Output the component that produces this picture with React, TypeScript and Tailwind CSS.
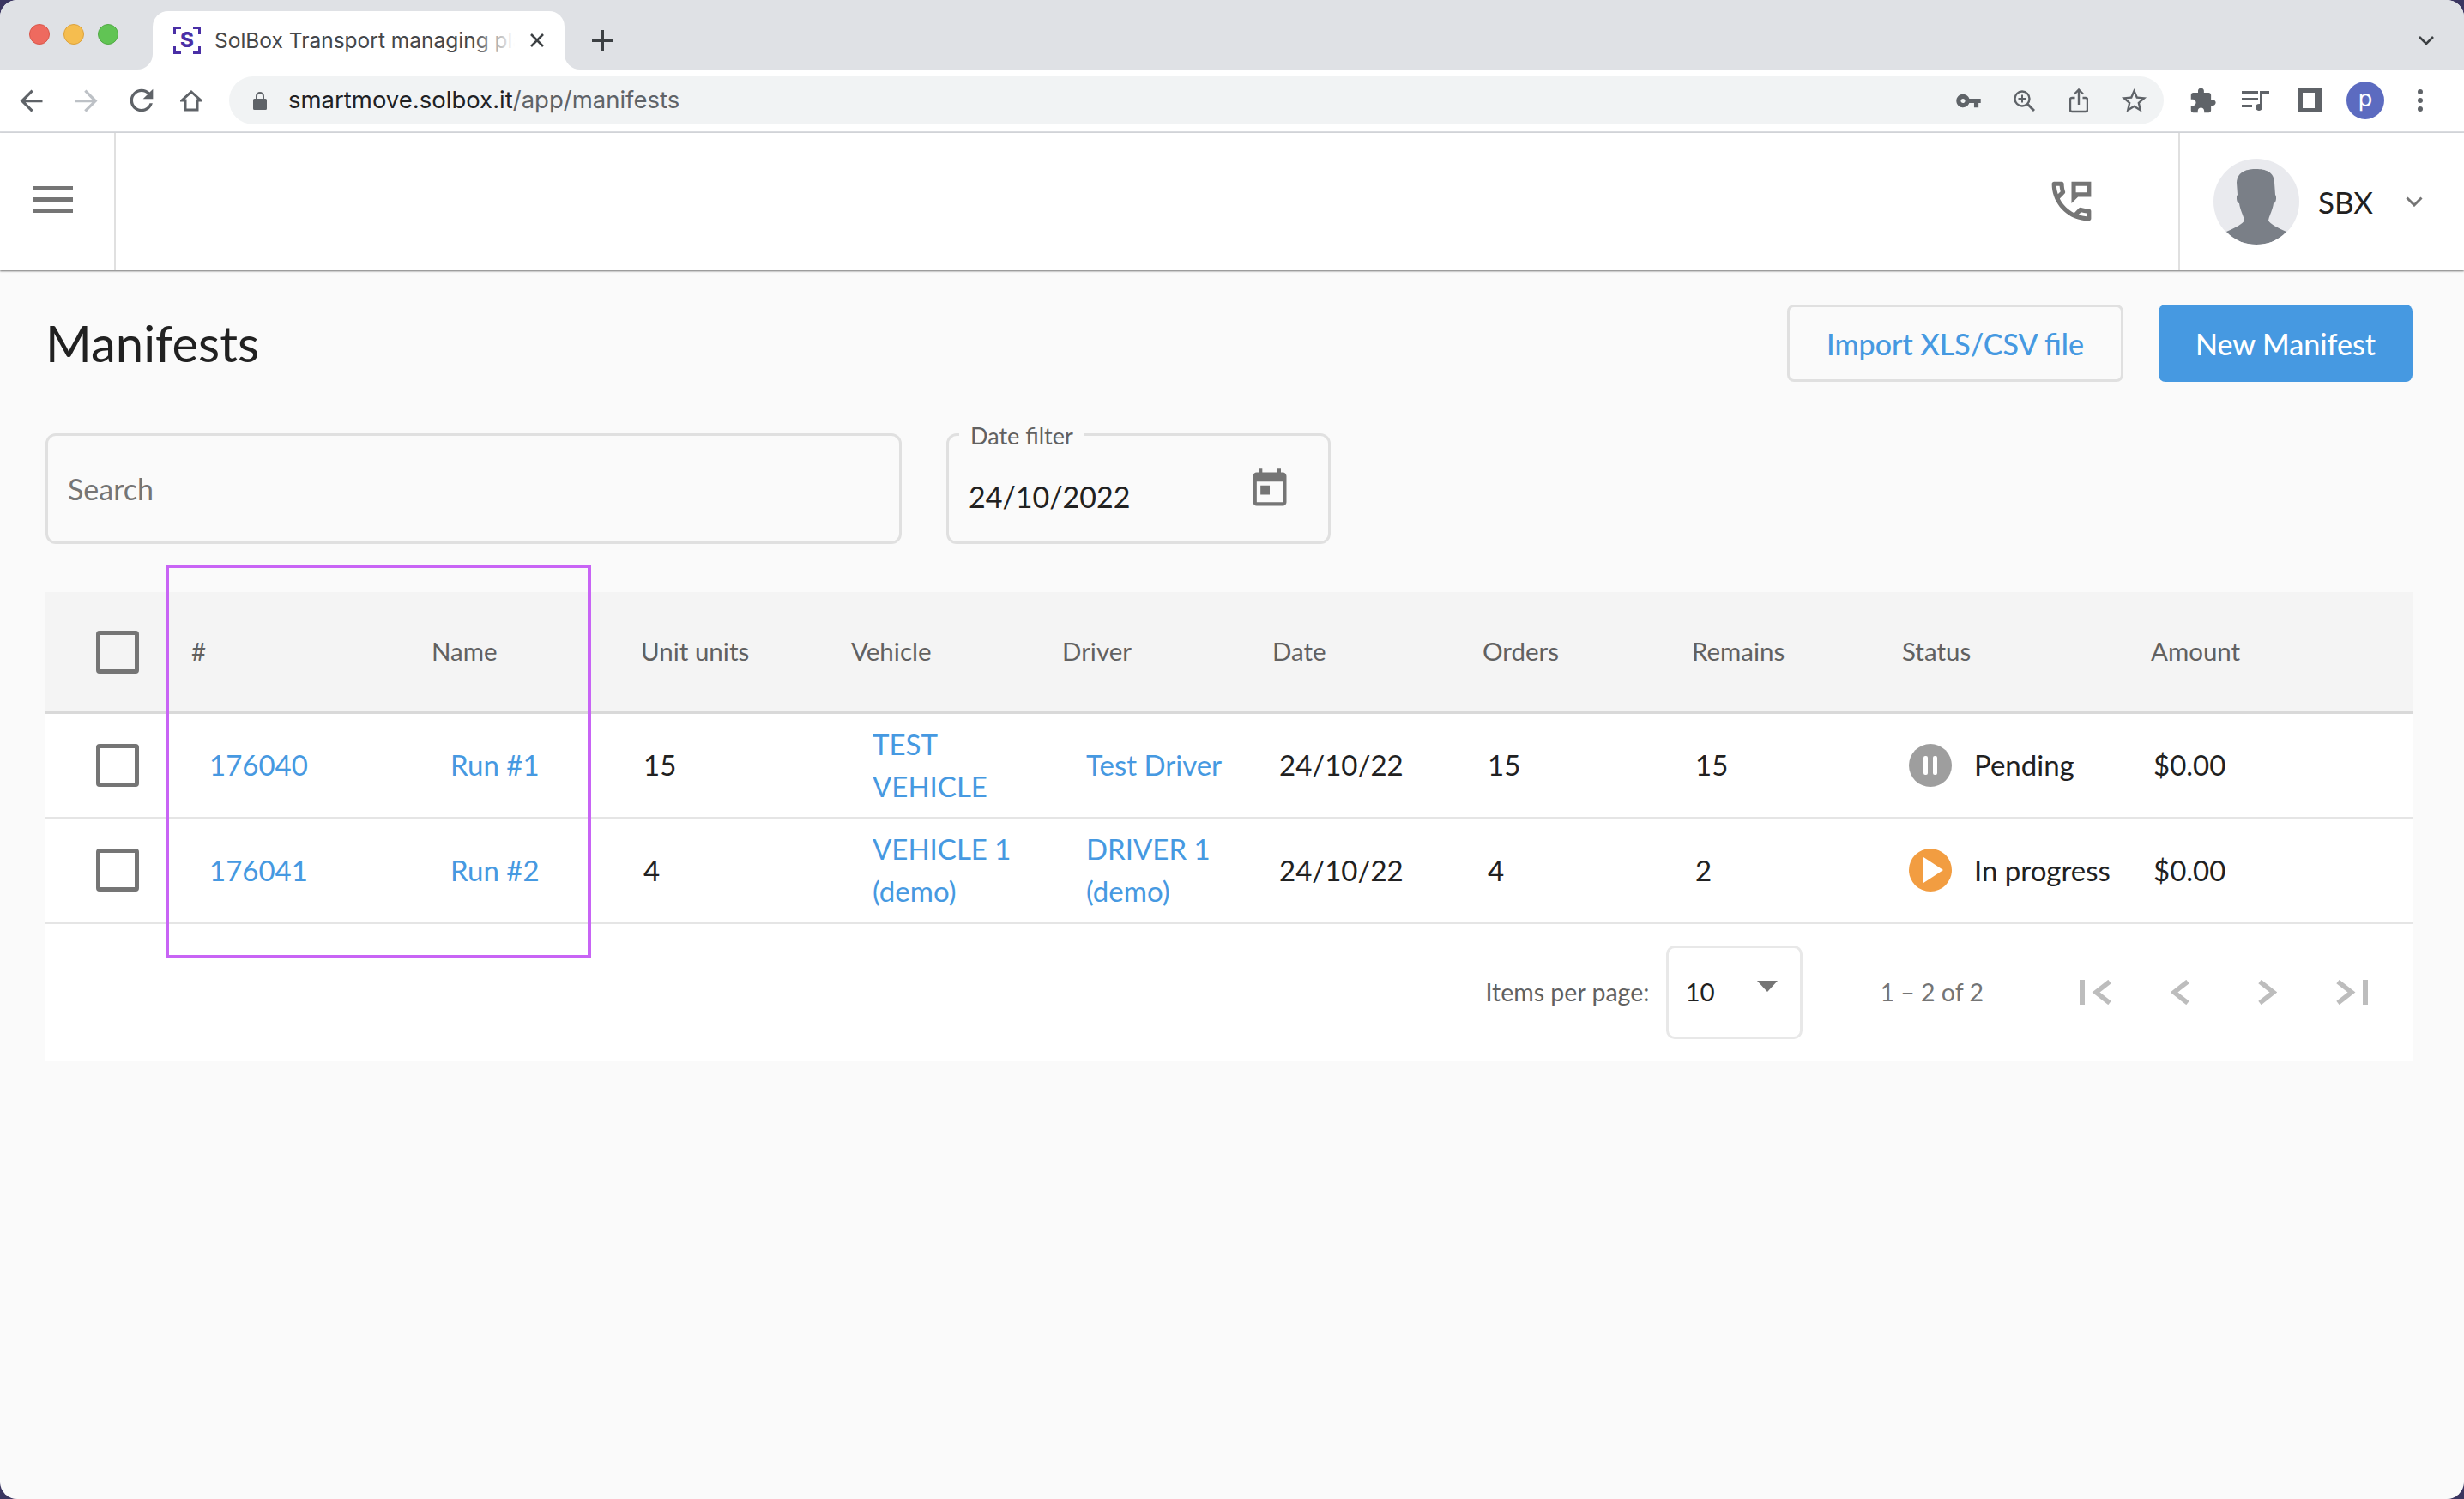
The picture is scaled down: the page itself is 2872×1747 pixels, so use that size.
import { Fragment } from "react";

const GRID = "grid grid-cols-[170px_280px_244px_245px_246px_245px_245px_244px_245px_290px_1fr]";

function Checkbox() {
  return <div className="ml-[59px] h-[50px] w-[50px] rounded-[4px] border-[5px] border-[#757575]" />;
}

function Favicon() {
  return (
    <svg viewBox="0 0 32 32" className="h-[32px] w-[32px]">
      <path
        d="M0 9V0h9v3H3v6zM23 0h9v9h-3V3h-6zM32 23v9h-9v-3h6v-6zM9 32H0v-9h3v6h6z"
        fill="#4a2fa6"
      />
      <text x="16" y="24" textAnchor="middle" fontSize="24" fontWeight="800" fill="#4a2fa6" fontFamily="Inter, sans-serif">
        S
      </text>
    </svg>
  );
}

function Tab() {
  return (
    <div className="relative ml-[40px] mt-[13px] flex h-[68px] w-[480px] items-center rounded-t-[18px] bg-white pl-[24px]">
      <div className="absolute bottom-0 left-[-18px] h-[18px] w-[18px] bg-white">
        <div className="h-full w-full rounded-br-[18px] bg-[#dfe1e5]" />
      </div>
      <div className="absolute bottom-0 right-[-18px] h-[18px] w-[18px] bg-white">
        <div className="h-full w-full rounded-bl-[18px] bg-[#dfe1e5]" />
      </div>
      <Favicon />
      <div className="relative ml-[16px] w-[350px] overflow-hidden whitespace-nowrap text-[24.5px] text-[#45474a]">
        SolBox Transport managing platform
        <div className="absolute inset-y-0 right-0 w-[50px] bg-gradient-to-r from-transparent to-white" />
      </div>
      <svg viewBox="0 0 16 16" className="ml-[18px] h-[16px] w-[16px]" stroke="#3c4043" strokeWidth="2.6">
        <path d="M1 1l14 14M15 1L1 15" />
      </svg>
    </div>
  );
}

function ChromeIcon({ d, className, fill = "#5f6368" }: { d: string; className: string; fill?: string }) {
  return (
    <svg viewBox="0 0 24 24" className={className} fill={fill}>
      <path d={d} />
    </svg>
  );
}

function BrowserChrome() {
  return (
    <div className="[font-family:Inter,sans-serif]">
      <div className="flex h-[81px] items-start bg-[#dfe1e5]">
        <div className="ml-[34px] mt-[28px] flex gap-[16px]">
          <div className="h-[24px] w-[24px] rounded-full border border-[#d9564a] bg-[#ee6a5f]" />
          <div className="h-[24px] w-[24px] rounded-full border border-[#dca23c] bg-[#f5bd4f]" />
          <div className="h-[24px] w-[24px] rounded-full border border-[#52aa45] bg-[#61c454]" />
        </div>
        <Tab />
        <svg viewBox="0 0 24 24" className="ml-[32px] mt-[35px] h-[24px] w-[24px]" stroke="#3c4043" strokeWidth="4">
          <path d="M12 0v24M0 12h24" />
        </svg>
        <svg viewBox="0 0 18 11" fill="none" className="ml-auto mr-[35px] mt-[42px] h-[11px] w-[18px]" stroke="#3c4043" strokeWidth="2.6">
          <path d="M1 1l8 8 8-8" />
        </svg>
      </div>
      <div className="flex h-[72px] items-center bg-white">
        <ChromeIcon
          className="ml-[17px] h-[39px] w-[39px]"
          d="M20 11H7.83l5.59-5.59L12 4l-8 8 8 8 1.41-1.41L7.83 13H20v-2z"
        />
        <ChromeIcon
          className="ml-[25px] h-[39px] w-[39px] rotate-180"
          fill="#bdc1c6"
          d="M20 11H7.83l5.59-5.59L12 4l-8 8 8 8 1.41-1.41L7.83 13H20v-2z"
        />
        <ChromeIcon
          className="ml-[25px] h-[40px] w-[40px]"
          d="M17.65 6.35C16.2 4.9 14.21 4 12 4c-4.42 0-7.99 3.58-7.99 8s3.57 8 7.99 8c3.73 0 6.84-2.55 7.73-6h-2.08c-.82 2.33-3.04 4-5.65 4-3.31 0-6-2.69-6-6s2.69-6 6-6c1.66 0 3.14.69 4.22 1.78L13 11h7V4l-2.35 2.35z"
        />
        <svg viewBox="0 0 26 25" fill="none" className="ml-[25px] h-[25px] w-[26px]" stroke="#5f6368" strokeWidth="3">
          <path d="M13 2l11 10h-4v11H6V12H2z" />
        </svg>
        <div className="ml-[31px] flex h-[56px] w-[2255px] items-center rounded-full bg-[#f1f3f4]">
          <svg viewBox="0 0 16 21" className="ml-[28px] h-[21px] w-[16px]" fill="#5f6368">
            <path d="M3 8V5a5 5 0 0 1 10 0v3h1.5A1.5 1.5 0 0 1 16 9.500V19.500A1.500 1.500 0 0 1 14.500 21H1.500A1.500 1.500 0 0 1 0 19.500V9.500A1.500 1.500 0 0 1 1.500 8zm2 0h6V5a3 3 0 0 0-6 0z" />
          </svg>
          <div className="ml-[25px] text-[27.5px] text-[#202124]">
            smartmove.solbox.it<span className="text-[#5f6368]">/app/manifests</span>
          </div>
          <ChromeIcon
            className="ml-auto h-[31px] w-[31px]"
            d="M12.65 10C11.83 7.67 9.61 6 7 6c-3.31 0-6 2.69-6 6s2.69 6 6 6c2.61 0 4.83-1.67 5.65-4H17v4h4v-4h2v-4H12.65zM7 14c-1.100 0-2-.9-2-2s.9-2 2-2 2 .9 2 2-.9 2-2 2z"
          />
          <svg viewBox="0 0 25 25" fill="none" className="ml-[37px] h-[25px] w-[25px]" stroke="#5f6368" strokeWidth="2.4">
            <circle cx="10" cy="10" r="8.500" />
            <path d="M16 16l8 8" strokeWidth="3" />
            <path d="M10 5.500v9M5.500 10h9" strokeWidth="2" />
          </svg>
          <svg viewBox="0 0 22 29" fill="none" className="ml-[40px] h-[29px] w-[22px]" stroke="#5f6368" strokeWidth="2.400">
            <path d="M6.500 11H3a2 2 0 0 0-2 2v12a2 2 0 0 0 2 2h16a2 2 0 0 0 2-2V13a2 2 0 0 0-2-2h-3.500M11 19V2M6 6.500L11 1.500l5 5" />
          </svg>
          <ChromeIcon
            className="ml-[36px] h-[35px] w-[35px]"
            d="M22 9.240l-7.190-.62L12 2 9.190 8.630 2 9.240l5.460 4.730L5.820 21 12 17.270 18.180 21l-1.630-7.030L22 9.240zM12 15.400l-3.760 2.270 1-4.280-3.320-2.880 4.380-.38L12 6.100l1.710 4.040 4.380.38-3.320 2.880 1 4.280L12 15.400z"
          />
          <div className="w-[17px]" />
        </div>
        <ChromeIcon
          className="ml-[29px] h-[33px] w-[33px]"
          d="M20.500 11H19V7c0-1.100-.9-2-2-2h-4V3.500C13 2.120 11.880 1 10.500 1S8 2.120 8 3.500V5H4c-1.100 0-1.990.9-1.990 2v3.800H3.500c1.490 0 2.700 1.210 2.700 2.700s-1.210 2.700-2.700 2.700H2V20c0 1.100.9 2 2 2h3.800v-1.500c0-1.490 1.210-2.700 2.700-2.700 1.490 0 2.700 1.210 2.700 2.700V22H17c1.100 0 2-.9 2-2v-4h1.500c1.380 0 2.500-1.120 2.500-2.500S21.880 11 20.500 11z"
        />
        <svg viewBox="0 0 32 23" className="ml-[29px] h-[23px] w-[32px]" fill="#5f6368">
          <path d="M0 0h19v3H0zM0 8h19v3H0zM0 16h12v3H0zM21 0h11v3h-8v16a4 4 0 1 1-3-3.900z" />
        </svg>
        <div className="ml-[34px] h-[28px] w-[28px] border-y-[5px] border-l-[5px] border-r-[9px] border-[#5f6368] bg-white" />
        <div className="ml-[28px] flex h-[44px] w-[44px] items-center justify-center rounded-full bg-[#5c6bc0] pb-[4px] text-[27px] text-white">
          p
        </div>
        <div className="ml-[39px] flex flex-col gap-[4px]">
          <div className="h-[6px] w-[6px] rounded-full bg-[#5f6368]" />
          <div className="h-[6px] w-[6px] rounded-full bg-[#5f6368]" />
          <div className="h-[6px] w-[6px] rounded-full bg-[#5f6368]" />
        </div>
      </div>
      <div className="h-[2px] bg-[#dadce0]" />
    </div>
  );
}

function AppHeader() {
  return (
    <div className="relative flex h-[160px] items-stretch bg-white shadow-[0_1px_2px_rgba(0,0,0,0.55)]">
      <div className="flex w-[133px] flex-col justify-center gap-[8px] pb-[5px] pl-[39px]">
        <div className="h-[5px] w-[46px] bg-[#757575]" />
        <div className="h-[5px] w-[46px] bg-[#757575]" />
        <div className="h-[5px] w-[46px] bg-[#757575]" />
      </div>
      <div className="w-[2px] bg-[#e0e0e0]" />
      <div className="flex flex-1 items-center justify-end pr-[94px]">
        <svg viewBox="0 0 24 24" className="mb-[2px] h-[61px] w-[61px]" fill="#757575">
          <path d="M20 15.500c-1.250 0-2.450-.2-3.570-.57-.1-.03-.21-.05-.31-.05-.26 0-.51.1-.71.29l-2.200 2.200c-2.830-1.450-5.150-3.760-6.590-6.590l2.200-2.210c.28-.26.36-.65.25-1C8.700 6.450 8.500 5.250 8.500 4c0-.55-.45-1-1-1H4c-.55 0-1 .45-1 1 0 9.390 7.610 17 17 17 .55 0 1-.45 1-1v-3.500c0-.55-.45-1-1-1zM5.030 5h1.500c.07.88.22 1.750.45 2.580l-1.200 1.210c-.4-1.210-.66-2.470-.75-3.790zM19 18.970c-1.320-.09-2.600-.35-3.800-.76l1.200-1.200c.85.24 1.720.39 2.600.45v1.510zM12 3v10l3-3h6V3h-9zm7 5h-5V5h5v3z" />
        </svg>
      </div>
      <div className="w-[2px] bg-[#e0e0e0]" />
      <div className="flex w-[331px] items-center pl-[39px]">
        <svg viewBox="0 0 100 100" className="h-[100px] w-[100px] rounded-full bg-[#e9eaee]">
          <path
            d="M50 12C40 12 28 14 27 28L28 42C26 44 27 52 30 52C31 60 35 66 36 72C34 76 26 80 15 85C25 96 38 100 50 100C62 100 75 96 85 85C74 80 66 76 64 72C65 66 69 60 70 52C73 52 74 44 72 42L71 28C71 15 60 12 50 12Z"
            fill="#7a7f87"
          />
        </svg>
        <div className="ml-[22px] text-[35px] text-[#212121]">SBX</div>
        <svg viewBox="0 0 20 12" fill="none" className="ml-[38px] h-[12px] w-[20px]" stroke="#757575" strokeWidth="3">
          <path d="M1.500 1.500l8.500 8.500 8.500-8.500" />
        </svg>
      </div>
    </div>
  );
}

function Toolbar() {
  return (
    <div className="flex h-[90px] items-center">
      <h1 className="text-[58px] font-normal leading-none text-[#212121]">Manifests</h1>
      <button className="ml-auto h-[90px] w-[392px] rounded-[8px] border-[3px] border-[#e0e0e0] text-[34px] font-medium text-[#4699e1]">
        Import XLS/CSV file
      </button>
      <button className="ml-[41px] h-[90px] w-[296px] rounded-[8px] bg-[#4699e1] text-[34px] font-medium text-white">
        New Manifest
      </button>
    </div>
  );
}

function Filters() {
  return (
    <div className="mt-[60px] flex gap-[52px]">
      <div className="flex h-[129px] w-[998px] items-center rounded-[12px] border-[3px] border-[#e0e0e0] pl-[23px] text-[34px] text-[#757575]">
        Search
      </div>
      <div className="relative flex h-[129px] w-[448px] items-center rounded-[12px] border-[3px] border-[#e0e0e0] pl-[23px] pt-[18px] text-[34px] text-[#212121]">
        <div className="absolute left-[12px] top-[-20px] bg-[#fafafa] px-[13px] text-[27px] text-[#616161]">Date filter</div>
        24/10/2022
        <svg viewBox="0 0 24 24" className="ml-auto mr-[42px] mt-[-18px] h-[52px] w-[52px]" fill="#757575">
          <path d="M19 3h-1V1h-2v2H8V1H6v2H5c-1.110 0-1.990.9-1.990 2L3 19c0 1.100.89 2 2 2h14c1.100 0 2-.9 2-2V5c0-1.100-.9-2-2-2zm0 16H5V8h14v11zM7 10h5v5H7z" />
        </svg>
      </div>
    </div>
  );
}

const HEADERS = ["#", "Name", "Unit units", "Vehicle", "Driver", "Date", "Orders", "Remains", "Status", "Amount"];

const ROWS = [
  {
    id: "176040",
    name: "Run #1",
    units: "15",
    vehicle: ["TEST", "VEHICLE"],
    driver: ["Test Driver"],
    orders: "15",
    remains: "15",
    status: "Pending",
  },
  {
    id: "176041",
    name: "Run #2",
    units: "4",
    vehicle: ["VEHICLE 1", "(demo)"],
    driver: ["DRIVER 1", "(demo)"],
    orders: "4",
    remains: "2",
    status: "In progress",
  },
];

function StatusIcon({ status }: { status: string }) {
  if (status === "Pending") {
    return (
      <div className="flex h-[50px] w-[50px] items-center justify-center gap-[6px] rounded-full bg-[#9e9e9e]">
        <div className="h-[22px] w-[5px] rounded-[2px] bg-white" />
        <div className="h-[22px] w-[5px] rounded-[2px] bg-white" />
      </div>
    );
  }
  return (
    <svg viewBox="0 0 50 50" className="h-[50px] w-[50px]">
      <circle cx="25" cy="25" r="25" fill="#f29d41" />
      <path d="M17 10l23 15-23 15z" fill="white" />
    </svg>
  );
}

function ManifestTable() {
  return (
    <div className="mt-[56px] bg-white">
      <div className={`${GRID} h-[142px] items-center border-b-[3px] border-[#d9d9d9] bg-[#f4f4f4] text-[29.500px] text-[#616161]`}>
        <Checkbox />
        {HEADERS.map((h) => (
          <div key={h}>{h}</div>
        ))}
      </div>
      {ROWS.map((row) => (
        <div key={row.id} className={`${GRID} h-[122.500px] items-center border-b-[3px] border-[#e5e5e5] text-[33px] leading-[49px] text-[#212121]`}>
          <Checkbox />
          <div className="pl-[21px] text-[#4699e1]">{row.id}</div>
          <div className="pl-[22px] text-[#4699e1]">{row.name}</div>
          <div className="pl-[3px]">{row.units}</div>
          <div className="pl-[25px] text-[#4699e1]">
            {row.vehicle.map((line, i) => (
              <Fragment key={line}>
                {i > 0 ? <br /> : null}
                {line}
              </Fragment>
            ))}
          </div>
          <div className="pl-[28px] text-[#4699e1]">
            {row.driver.map((line, i) => (
              <Fragment key={line}>
                {i > 0 ? <br /> : null}
                {line}
              </Fragment>
            ))}
          </div>
          <div className="pl-[8px]">24/10/22</div>
          <div className="pl-[6px]">{row.orders}</div>
          <div className="pl-[4px]">{row.remains}</div>
          <div className="flex items-center pl-[8px]">
            <StatusIcon status={row.status} />
            <span className="ml-[26px] whitespace-nowrap">{row.status}</span>
          </div>
          <div className="pl-[3px]">$0.00</div>
        </div>
      ))}
      <div className="flex h-[159px] items-center pr-[52px]">
        <div className="ml-auto text-[28.500px] text-[#616161]">Items per page:</div>
        <div className="ml-[20px] flex h-[109px] w-[159px] items-center rounded-[10px] border-[3px] border-[#e8e8e8] pl-[19px] text-[29.500px] text-[#212121]">
          10
          <div className="ml-[49px] mt-[-15px] h-0 w-0 border-x-[12px] border-t-[13px] border-x-transparent border-t-[#757575]" />
        </div>
        <div className="ml-[90px] text-[28.500px] text-[#757575]">1 – 2 of 2</div>
        <svg viewBox="0 0 37 29" fill="none" className="ml-[112px] h-[29px] w-[37px]" stroke="#bdbdbd" strokeWidth="6">
          <path d="M3 0v29" />
          <path d="M35 2L19 14.500 35 27" strokeWidth="5.500" />
        </svg>
        <svg viewBox="0 0 22 29" fill="none" className="ml-[69px] h-[29px] w-[22px]" stroke="#bdbdbd" strokeWidth="5.500">
          <path d="M20 2L4 14.500 20 27" />
        </svg>
        <svg viewBox="0 0 22 29" fill="none" className="ml-[80px] h-[29px] w-[22px]" stroke="#bdbdbd" strokeWidth="5.500">
          <path d="M2 2l16 12.500L2 27" />
        </svg>
        <svg viewBox="0 0 37 29" fill="none" className="ml-[69px] h-[29px] w-[37px]" stroke="#bdbdbd" strokeWidth="6">
          <path d="M34 0v29" />
          <path d="M2 2l16 12.500L2 27" strokeWidth="5.500" />
        </svg>
      </div>
    </div>
  );
}

export default function App() {
  return (
    <div className="h-[1747px] w-[2872px] overflow-hidden bg-[#3a3560]">
      <div className="relative h-full overflow-hidden rounded-[20px] bg-[#fafafa] [font-family:Lato,sans-serif]">
        <BrowserChrome />
        <AppHeader />
        <div className="px-[53px] pr-[60px] pt-[40px]">
          <Toolbar />
          <Filters />
          <ManifestTable />
        </div>
        <div className="absolute left-[193px] top-[658px] h-[459px] w-[496px] border-[4px] border-[#c864f5]" />
      </div>
    </div>
  );
}
